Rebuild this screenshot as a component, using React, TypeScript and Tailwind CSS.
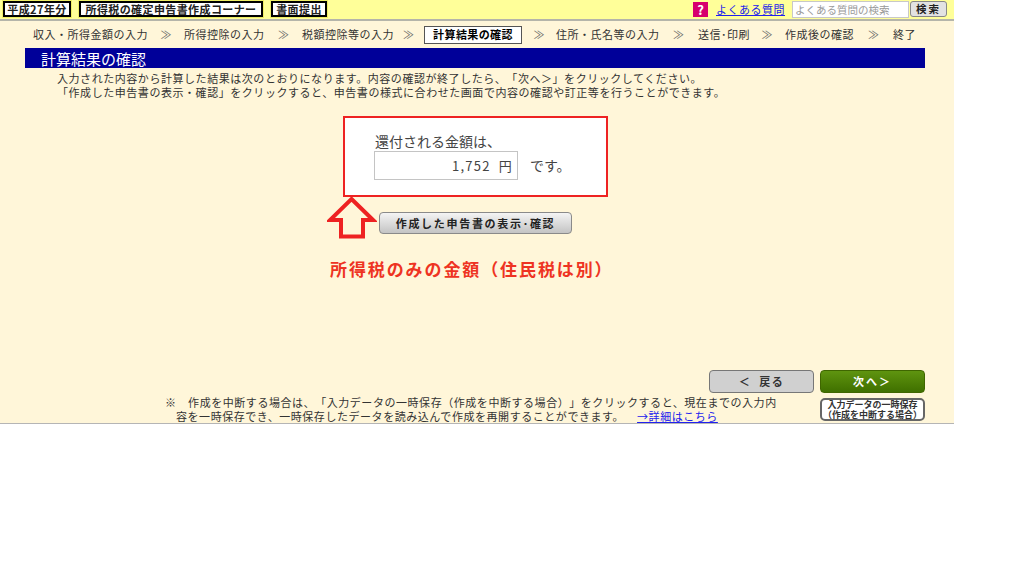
const font = "[font-family:'Noto_Sans_CJK_JP','Liberation_Sans',sans-serif] [text-spacing-trim:space-all]";

const steps = [
  { label: '収入・所得金額の入力', w: 'w-[115px]', gap: 'w-[36px]' },
  { label: '所得控除の入力', w: 'w-[81px]', gap: 'w-[37px]' },
  { label: '税額控除等の入力', w: 'w-[91px]', gap: 'w-[31px]' },
];

const stepsAfter = [
  { label: '住所・氏名等の入力', w: 'w-[103px]', gap: 'w-[39px]' },
  { label: '送信･印刷', w: 'w-[51px]', gap: 'w-[36px]' },
  { label: '作成後の確認', w: 'w-[69px]', gap: 'w-[39px]' },
  { label: '終了', w: 'w-[24px]', gap: '' },
];

const Chevron = ({ w }: { w: string }) => <span className={`${w} text-center text-[11px] text-[#666666]`}>≫</span>;

const HeaderTag = ({ children, className }: { children: string; className: string }) => (
  <div className={`flex h-[16px] items-center justify-center border-2 border-black bg-white text-[11px] font-bold tracking-[0.4px] text-[#222222] shadow-[0_0_0_1px_#eeee66] ${className}`}>
    {children}
  </div>
);

export default function App() {
  return (
    <div className={`${font} h-[576px] w-[1024px] overflow-hidden bg-white`}>
      <div className="flex h-[424px] w-[954px] flex-col border-b border-[#b5b5b5] bg-[#fff6d9]">
        {/* Header */}
        <header className="flex h-[21px] items-start border-b-2 border-[#b5b5aa] bg-[#ffff99] pl-[3px] pt-px">
          <HeaderTag className="w-[68px]">平成27年分</HeaderTag>
          <HeaderTag className="ml-[8px] w-[184px]">所得税の確定申告書作成コーナー</HeaderTag>
          <HeaderTag className="ml-[8px] w-[56px]">書面提出</HeaderTag>
          <div className="ml-[366px] mt-px flex h-[15px] w-[15px] items-center justify-center bg-[#d6006e] text-[13px] font-bold leading-none text-white">?</div>
          <a className="ml-[8px] w-[70px] whitespace-nowrap text-[11px] leading-[17px] tracking-[0.5px] text-[#2020ee] underline">よくある質問</a>
          <div className="ml-[6px] flex h-[17px] w-[117px] items-center border border-[#c8c8c8] bg-white pl-[2px] text-[10.5px] text-[#999999]">よくある質問の検索</div>
          <div className="ml-px flex h-[16px] w-[37px] items-center justify-center rounded-[3px] border border-[#888888] bg-[#e2e2e2] text-[10.5px] font-bold tracking-[2px] text-[#222222]">検索</div>
        </header>

        {/* Step nav */}
        <nav className="flex h-[27px] items-center pl-[33px] text-[11px] text-[#333333]">
          {steps.map((s) => (
            <div key={s.label} className="flex items-center">
              <span className={`${s.w} whitespace-nowrap tracking-[0.5px]`}>{s.label}</span>
              <Chevron w={s.gap} />
            </div>
          ))}
          <div className="flex h-[18px] w-[98px] items-center justify-center border border-[#555555] bg-white font-bold tracking-[0.4px] text-black">計算結果の確認</div>
          <Chevron w="w-[34px]" />
          {stepsAfter.map((s) => (
            <div key={s.label} className="flex items-center">
              <span className={`${s.w} whitespace-nowrap tracking-[0.5px]`}>{s.label}</span>
              {s.gap && <Chevron w={s.gap} />}
            </div>
          ))}
        </nav>

        {/* Title bar */}
        <div className="mx-[25px] flex h-[20px] w-[900px] items-center bg-[#000099] pl-[16px] text-[15px] leading-none text-white">計算結果の確認</div>

        {/* Lead text */}
        <p className="mt-[3px] whitespace-nowrap pl-[57px] text-[11px] leading-[14px] tracking-[0.55px] text-[#333333]">
          入力された内容から計算した結果は次のとおりになります。内容の確認が終了したら、「次へ＞」をクリックしてください。
          <br />
          「作成した申告書の表示・確認」をクリックすると、申告書の様式に合わせた画面で内容の確認や訂正等を行うことができます。
        </p>

        {/* Result box */}
        <div className="ml-[343px] mt-[17px] flex h-[81px] w-[265px] flex-col border-2 border-[#ee2222] bg-white pl-[29px] pt-[14px] text-[#444444]">
          <div className="ml-px text-[14px] leading-[19px]">還付される金額は、</div>
          <div className="flex items-center">
            <div className="flex h-[29px] w-[144px] items-center justify-end border border-[#c4c4c4] pr-[4px] text-[13px] tracking-[1.2px]">1,752&nbsp;&nbsp;円</div>
            <span className="ml-[12px] text-[14px]">です。</span>
          </div>
        </div>

        {/* Arrow + preview button */}
        <div className="ml-[327px] flex h-[42px] items-end">
          <svg width="50" height="43" viewBox="0 0 50 43" className="shrink-0">
            <path d="M24.5 3 L46 24 H36 V40.5 H14 V24 H3 Z" fill="none" stroke="#ee2222" strokeWidth="4" />
          </svg>
          <div className="mb-[5px] ml-[2px] flex h-[22px] w-[193px] items-center justify-center rounded-[4px] border border-[#8a8a8a] bg-gradient-to-b from-[#f4f4f4] to-[#c4c4c4] text-[11px] font-bold tracking-[1.7px] text-[#222222]">
            作成した申告書の表示･確認
          </div>
        </div>

        {/* Red note */}
        <div className="ml-[330px] mt-[19px] whitespace-nowrap text-[17px] font-bold leading-[22px] tracking-[1.9px] text-[#ee3322]">所得税のみの金額（住民税は別）</div>

        {/* Footer */}
        <div className="mt-auto flex items-end pb-[2px] pl-[165px]">
          <p className="-mb-[2px] w-[645px] shrink-0 whitespace-nowrap text-[11px] leading-[14px] tracking-[0.55px] text-[#333333]">
            ※　作成を中断する場合は、「入力データの一時保存（作成を中断する場合）」をクリックすると、現在までの入力内
            <br />
            <span className="pl-[11px]">容を一時保存でき、一時保存したデータを読み込んで作成を再開することができます。</span>
            <a className="ml-[13px] text-[#2222ee] underline">→詳細はこちら</a>
          </p>
          <div className="ml-[-101px] flex w-[216px] flex-col">
            <div className="flex gap-[6px]">
              <div className="flex h-[23px] w-[105px] items-center justify-center rounded-[4px] border border-[#777777] bg-[#d0d0d0] text-[11px] font-bold tracking-[1.5px] text-[#333333]">＜&nbsp;&nbsp;戻る</div>
              <div className="flex h-[23px] w-[105px] items-center justify-center rounded-[4px] border border-[#3f6600] bg-gradient-to-b from-[#5f9410] to-[#3f7000] text-[11px] font-bold tracking-[2px] text-white">次へ＞</div>
            </div>
            <div className="ml-[111px] mt-[5px] h-[23px] w-[105px] whitespace-nowrap rounded-[5px] border-2 border-[#666666] bg-white text-center text-[9px] font-bold leading-[9.5px] text-[#333333]">
              入力データの一時保存
              <br />
              （作成を中断する場合）
            </div>
          </div>
        </div>
      </div>
    </div>
  );
}
